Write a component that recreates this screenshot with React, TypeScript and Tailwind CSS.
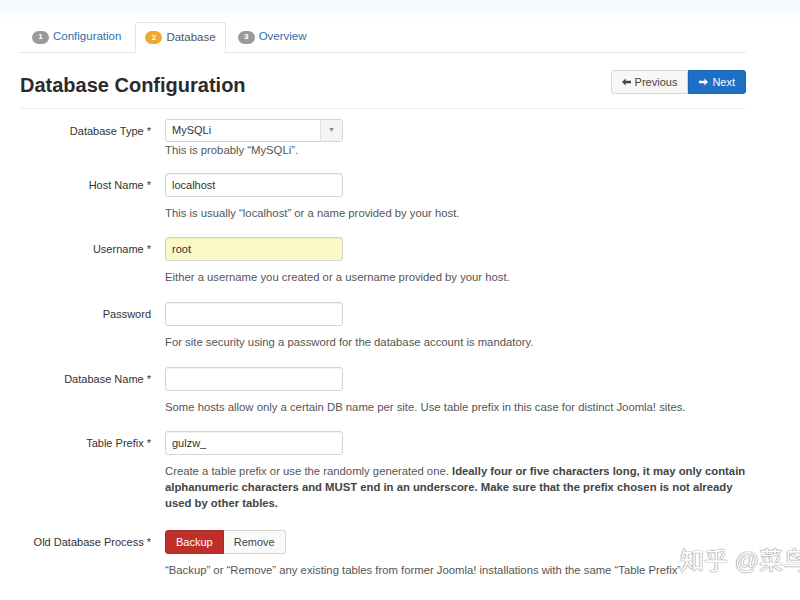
import { ReactNode } from "react";

const font = "font-['Liberation_Sans',Arial,'Noto_Sans_CJK_SC',sans-serif]";

function Badge({ n, active }: { n: number; active?: boolean }) {
  return (
    <span
      className={`inline-flex h-[13px] min-w-[17px] items-center justify-center rounded-full px-1 text-[8px] font-bold leading-none text-white ${
        active ? "bg-[#f0a830]" : "bg-[#9a9a9a]"
      }`}
    >
      {n}
    </span>
  );
}

function Row({
  label,
  children,
  help,
  helpClass = "mt-[8px] mb-[16px]",
}: {
  label: string;
  children: ReactNode;
  help: ReactNode;
  helpClass?: string;
}) {
  return (
    <div className="flex">
      <div className="w-[131px] shrink-0 text-right text-[11px] leading-[24px] text-[#333]">{label}</div>
      <div className="ml-[14px] w-[590px]">
        {children}
        <div className={`text-[11.3px] leading-[16px] text-[#555] ${helpClass}`}>{help}</div>
      </div>
    </div>
  );
}

function TextInput({ value = "", yellow }: { value?: string; yellow?: boolean }) {
  return (
    <div
      className={`flex h-[24px] w-[178px] items-center rounded-[3px] border border-[#d4d4d4] px-[6px] text-[11px] text-[#333] shadow-[inset_0_1px_1px_rgba(0,0,0,0.06)] ${
        yellow ? "bg-[#fbf9c6]" : "bg-white"
      }`}
    >
      {value}
    </div>
  );
}

export default function App() {
  return (
    <div className={`relative h-[600px] w-[800px] overflow-hidden bg-white ${font}`}>
      <div className="h-[22px] bg-gradient-to-b from-[#f1f8fb] to-white" />

      {/* Tabs */}
      <div className="ml-5 flex w-[726px] border-b border-[#e6e6e6] text-[11.5px]">
        <div className="flex h-[30px] items-center gap-[4px] px-3 text-[#2f6fa8]">
          <Badge n={1} />
          <span>Configuration</span>
        </div>
        <div className="-mb-px ml-[2px] flex h-[31px] items-center gap-[4px] rounded-t-[3px] border border-b-white border-[#e6e6e6] bg-white px-[9px] text-[#555]">
          <Badge n={2} active />
          <span>Database</span>
        </div>
        <div className="flex h-[30px] items-center gap-[4px] px-3 text-[#2f6fa8]">
          <Badge n={3} />
          <span>Overview</span>
        </div>
      </div>

      {/* Header */}
      <div className="ml-5 mt-[17px] flex w-[726px] items-start justify-between border-b border-[#eeeeee] pb-[11px]">
        <h1 className="mt-[3px] text-[20px] font-bold leading-[24px] text-[#2b2b2b]">Database Configuration</h1>
        <div className="flex text-[11px]">
          <button className="flex h-[24px] items-center gap-[4px] rounded-l-[3px] border border-[#d6d6d6] bg-[#f7f7f7] px-[10px] text-[#444]">
            <svg width="9" height="8" viewBox="0 0 10 8">
              <path d="M0 4 L4 0 L4 2.5 L10 2.5 L10 5.5 L4 5.5 L4 8 Z" fill="#444" />
            </svg>
            Previous
          </button>
          <button className="flex h-[24px] items-center gap-[4px] rounded-r-[3px] border border-[#1d63b3] bg-[#1f6fc5] px-[10px] text-white">
            <svg width="9" height="8" viewBox="0 0 10 8">
              <path d="M10 4 L6 0 L6 2.5 L0 2.5 L0 5.5 L6 5.5 L6 8 Z" fill="#fff" />
            </svg>
            Next
          </button>
        </div>
      </div>

      {/* Form */}
      <div className="ml-5 pt-[10px]">
        <Row label="Database Type *" help={<>This is probably “MySQLi”.</>} helpClass="mt-0 mb-[15px]">
          <div className="flex h-[23px] w-[178px] items-stretch rounded-[3px] border border-[#d4d4d4] bg-white text-[11px] text-[#333]">
            <div className="flex flex-1 items-center px-[6px]">MySQLi</div>
            <div className="flex w-[22px] items-center justify-center border-l border-[#e0e0e0] bg-[#f4f4f4] text-[7px] text-[#888]">
              ▼
            </div>
          </div>
        </Row>
        <Row label="Host Name *" help={<>This is usually “localhost” or a name provided by your host.</>}>
          <TextInput value="localhost" />
        </Row>
        <Row label="Username *" help="Either a username you created or a username provided by your host." helpClass="mt-[8px] mb-[17px]">
          <TextInput value="root" yellow />
        </Row>
        <Row label="Password" help="For site security using a password for the database account is mandatory." helpClass="mt-[8px] mb-[17px]">
          <TextInput />
        </Row>
        <Row label="Database Name *" help="Some hosts allow only a certain DB name per site. Use table prefix in this case for distinct Joomla! sites.">
          <TextInput />
        </Row>
        <Row
          label="Table Prefix *"
          helpClass="mt-[8px] mb-[19px] leading-[16.5px]"
          help={
            <>
              Create a table prefix or use the randomly generated one.{" "}
              <b className="text-[#444]">
                Ideally four or five characters long, it may only contain alphanumeric characters and MUST end in an
                underscore. Make sure that the prefix chosen is not already used by other tables.
              </b>
            </>
          }
        >
          <TextInput value="gulzw_" />
        </Row>
        <Row
          label="Old Database Process *"
          help={<>“Backup” or “Remove” any existing tables from former Joomla! installations with the same “Table Prefix”.</>}
        >
          <div className="flex h-[24px] text-[11px]">
            <button className="rounded-l-[3px] border border-[#a82a25] bg-[#bf2f2a] px-[10px] text-white">Backup</button>
            <button className="rounded-r-[3px] border border-l-0 border-[#d6d6d6] bg-[#fafafa] px-[10px] text-[#444]">
              Remove
            </button>
          </div>
        </Row>
      </div>

      {/* watermark */}
      <div className="absolute left-[680px] top-[545px] whitespace-nowrap bg-white/70 text-[24px] leading-[32px] text-white [text-shadow:0_0_1px_#8a8a8a,0_0_1px_#8a8a8a,0_0_1px_#8a8a8a]">
        知乎 @菜鸟
      </div>
    </div>
  );
}
